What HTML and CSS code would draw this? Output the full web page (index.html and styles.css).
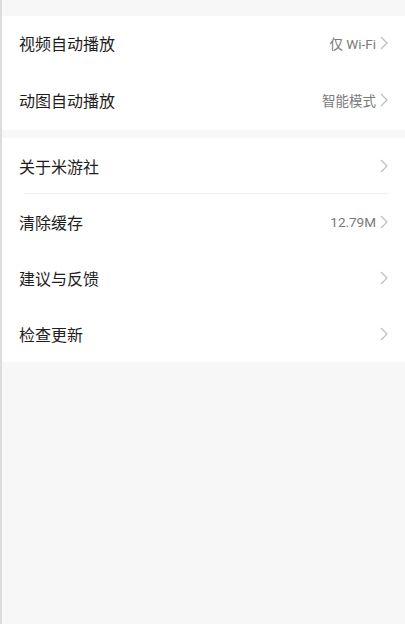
FILE: index.html
```html
<!DOCTYPE html>
<html lang="zh-CN">
<head>
    <meta charset="UTF-8">
    <meta name="viewport" content="width=device-width, initial-scale=1.0">
    <title>设置</title>
    <link rel="stylesheet" href="styles.css">
</head>
<body>
    <div class="page">
        <div class="group group-top">
            <div class="row">
                <span class="label">视频自动播放</span>
                <span class="value">仅 Wi-Fi</span>
                <svg class="chevron" viewBox="0 0 8 14"><path d="M1 1l6 6-6 6"/></svg>
            </div>
            <div class="row">
                <span class="label">动图自动播放</span>
                <span class="value">智能模式</span>
                <svg class="chevron" viewBox="0 0 8 14"><path d="M1 1l6 6-6 6"/></svg>
            </div>
        </div>

        <div class="group">
            <div class="row divided">
                <span class="label">关于米游社</span>
                <svg class="chevron" viewBox="0 0 8 14"><path d="M1 1l6 6-6 6"/></svg>
            </div>
            <div class="row">
                <span class="label">清除缓存</span>
                <span class="value">12.79M</span>
                <svg class="chevron" viewBox="0 0 8 14"><path d="M1 1l6 6-6 6"/></svg>
            </div>
            <div class="row">
                <span class="label">建议与反馈</span>
                <svg class="chevron" viewBox="0 0 8 14"><path d="M1 1l6 6-6 6"/></svg>
            </div>
            <div class="row">
                <span class="label">检查更新</span>
                <svg class="chevron" viewBox="0 0 8 14"><path d="M1 1l6 6-6 6"/></svg>
            </div>
        </div>
    </div>
</body>
</html>
```

FILE: styles.css
```css
body {
    margin: 0;
    font-family: Roboto, "Noto Sans CJK SC", sans-serif;
    background-color: #f7f7f7;
    height: 100vh;
    box-sizing: border-box;
    border-left: 2px solid #dcdcdc; /* edge of the screen behind */
}
.page {
    display: flex;
    flex-direction: column;
    gap: 8px;
    padding-top: 16px;
}
.group {
    background-color: #fff;
    display: flex;
    flex-direction: column;
}
.row {
    display: flex;
    align-items: center;
    height: 56px;
    padding: 0 17px;
    position: relative;
}
.group-top .row {
    height: 57px;
    box-sizing: border-box;
    padding-bottom: 4px; /* text sits a little high in the first card */
}
.row.divided::after { /* thin line under the first item */
    content: "";
    position: absolute;
    left: 22px;
    right: 17px;
    bottom: 0;
    border-bottom: 1px solid #f0f0f0;
}
.label {
    flex-grow: 1;
    font-size: 16px;
    color: #1e1e1e;
}
.value {
    font-size: 13.5px;
    color: #7a7a7a;
    margin-right: 4px;
}
.chevron {
    width: 8px;
    height: 14px;
    fill: none;
    stroke: #bdbdbd;
    stroke-width: 1.2;
}
```
